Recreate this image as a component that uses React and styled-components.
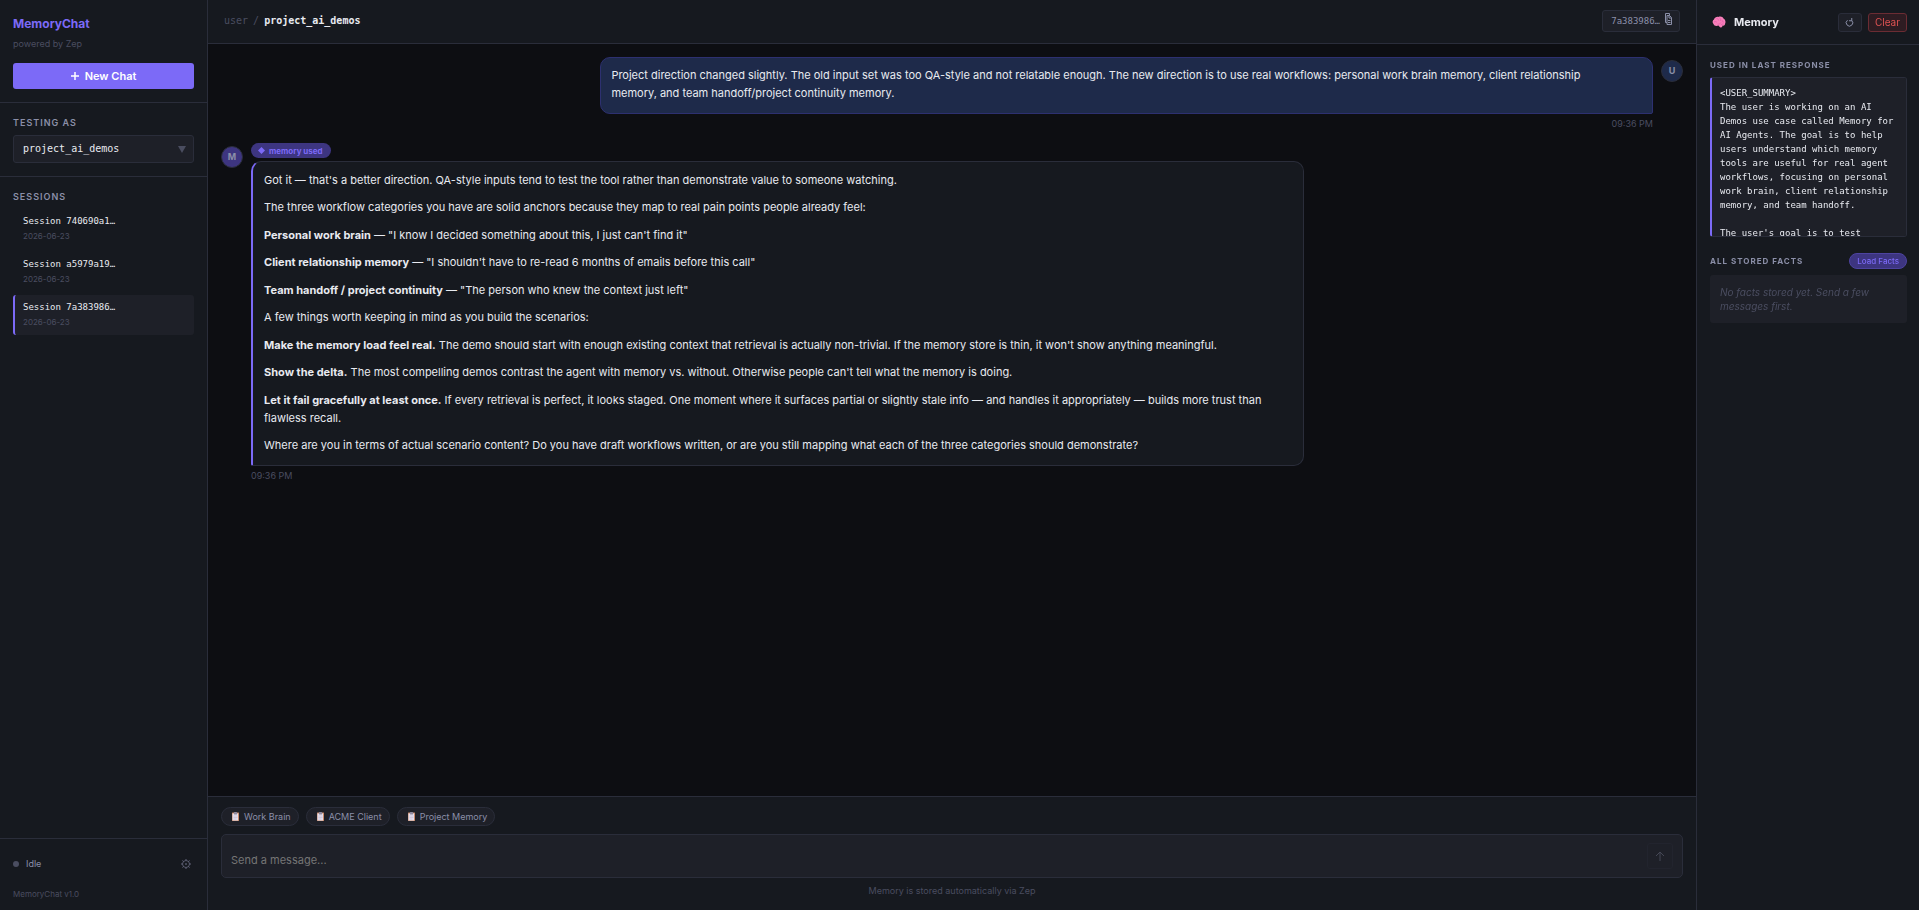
import React, { useState } from 'react';
import styled, { createGlobalStyle } from 'styled-components';

const sans = `Inter, 'Liberation Sans', sans-serif`;
const mono = `'DejaVu Sans Mono', 'Liberation Mono', monospace`;

const color = {
  bg: '#0d0e12',
  panel: '#16191f',
  raised: '#1e2028',
  line: '#2a2d3a',
  accent: '#7c6af7',
  accentDim: '#3d3580',
  text: '#e8eaf0',
  muted: '#8b8fa8',
  faint: '#4a4d60',
  user: '#1e2a4a',
  danger: '#e05252',
};

const GlobalStyle = createGlobalStyle`
  * {
    box-sizing: border-box;
    margin: 0;
    padding: 0;
  }

  body {
    background: ${color.bg};
    color: ${color.text};
    font-family: ${sans};
    font-size: 11px;
    line-height: 18px;
  }

  button,
  input,
  select {
    font-family: inherit;
    color: inherit;
  }

  button {
    cursor: pointer;
  }
`;

const Layout = styled.div`
  display: grid;
  grid-template-columns: 208px minmax(0, 1fr) 223px;
  height: 100vh;
`;

const Sidebar = styled.aside`
  display: flex;
  flex-direction: column;
  background: ${color.panel};
  border-right: 1px solid ${color.line};
`;

const Brand = styled.div`
  padding: 15px 13px 13px;
  border-bottom: 1px solid ${color.line};

  h1 {
    font-size: 12px;
    line-height: 18px;
    font-weight: 700;
    color: ${color.accent};
  }

  p {
    margin: 4px 0 12px;
    font-size: 9px;
    line-height: 14px;
    color: ${color.faint};
  }
`;

const NewChatButton = styled.button`
  display: flex;
  align-items: center;
  justify-content: center;
  gap: 6px;
  width: 100%;
  height: 26px;
  border: none;
  border-radius: 3px;
  background: ${color.accent};
  color: white;
  font-size: 11px;
  font-weight: 600;

  svg {
    stroke: currentColor;
    stroke-width: 1.5;
  }
`;

const Section = styled.section`
  padding: 13px;
  border-bottom: ${({ $last }) => ($last ? 'none' : `1px solid ${color.line}`)};
  flex: ${({ $last }) => ($last ? 1 : 'none')};
`;

const SectionLabel = styled.label`
  display: block;
  font-size: ${({ $small }) => ($small ? '8px' : '9px')};
  line-height: 14px;
  font-weight: ${({ $small }) => ($small ? 700 : 600)};
  letter-spacing: 1px;
  text-transform: uppercase;
  color: ${color.muted};
`;

const SelectBox = styled.div`
  display: grid;
  align-items: center;
  margin-top: 5px;

  select,
  svg {
    grid-area: 1 / 1;
  }

  select {
    appearance: none;
    width: 100%;
    height: 28px;
    padding: 0 24px 0 9px;
    border: 1px solid ${color.line};
    border-radius: 3px;
    background: ${color.raised};
    font-family: ${mono};
    font-size: 10px;
    line-height: 18px;
  }

  svg {
    justify-self: end;
    margin-right: 8px;
    pointer-events: none;
  }
`;

const SessionList = styled.ul`
  display: flex;
  flex-direction: column;
  gap: 3px;
  margin-top: 5px;
  list-style: none;
`;

const SessionItem = styled.button`
  display: flex;
  flex-direction: column;
  gap: 1px;
  width: 100%;
  padding: 6px 8px;
  border: none;
  border-left: 2px solid ${({ $active }) => ($active ? color.accent : 'transparent')};
  border-radius: 3px;
  background: ${({ $active }) => ($active ? color.raised : 'transparent')};
  text-align: left;
  font-size: 9px;
  line-height: 13px;

  .session-name {
    font-family: ${mono};
  }

  .session-date {
    font-size: 8px;
    line-height: 14px;
    color: ${color.faint};
  }
`;

const SidebarFooter = styled.footer`
  padding: 16px 13px 9px;
  border-top: 1px solid ${color.line};

  .version {
    margin-top: 14px;
    font-size: 8px;
    line-height: 14px;
    color: ${color.faint};
  }
`;

const StatusRow = styled.div`
  display: flex;
  align-items: center;
  gap: 7px;
  font-size: 9px;
  color: ${color.muted};

  .dot {
    width: 6px;
    height: 6px;
    border-radius: 50%;
    background: ${color.faint};
  }

  button {
    display: flex;
    margin-left: auto;
    margin-right: 3px;
    border: none;
    background: none;
    color: #6b6e84;
  }
`;

const Main = styled.main`
  display: flex;
  flex-direction: column;
  min-width: 0;
  min-height: 0;
`;

const TopBar = styled.header`
  display: flex;
  align-items: center;
  justify-content: space-between;
  padding: 10px 16px 11px;
  background: ${color.panel};
  border-bottom: 1px solid ${color.line};
`;

const Breadcrumb = styled.nav`
  display: flex;
  gap: 5px;
  font-family: ${mono};
  font-size: 10px;
  line-height: 14px;
  color: ${color.faint};

  strong {
    font-weight: 700;
    color: ${color.text};
  }
`;

const SessionPill = styled.button`
  display: flex;
  align-items: center;
  gap: 5px;
  height: 22px;
  padding: 0 7px 0 8px;
  border: 1px solid ${color.line};
  border-radius: 3px;
  background: ${color.raised};
  color: ${color.muted};
  font-family: ${mono};
  font-size: 9px;

  svg {
    margin-bottom: 4px;
  }
`;

const Messages = styled.div`
  flex: 1;
  display: flex;
  flex-direction: column;
  gap: 12px;
  min-height: 0;
  padding: 13px;
  overflow-y: auto;
`;

const MessageRow = styled.article`
  display: flex;
  flex-direction: ${({ $user }) => ($user ? 'row-reverse' : 'row')};
  align-items: flex-start;
  gap: 8px;
`;

const Avatar = styled.div`
  flex: none;
  display: flex;
  align-items: center;
  justify-content: center;
  width: 22px;
  height: 22px;
  margin-top: 3px;
  border: 1px solid ${color.line};
  border-radius: 50%;
  background: ${({ $user }) => ($user ? color.user : color.accentDim)};
  color: ${color.muted};
  font-size: 9px;
  font-weight: 700;
`;

const MessageBody = styled.div`
  display: flex;
  flex-direction: column;
  align-items: ${({ $user }) => ($user ? 'flex-end' : 'flex-start')};
  width: 72%;

  time {
    margin-top: 3px;
    font-size: 9px;
    line-height: 14px;
    color: ${color.faint};
  }
`;

const MemoryBadge = styled.span`
  display: flex;
  align-items: center;
  gap: 4px;
  height: 15px;
  margin-bottom: 3px;
  padding: 0 8px 0 7px;
  border-radius: 8px;
  background: ${color.accentDim};
  color: ${color.accent};
  font-size: 8px;
  font-weight: 700;
`;

const Bubble = styled.div`
  width: 100%;
  padding: ${({ $user }) => ($user ? '8px 32px 11px 10px' : '9px 11px 11px')};
  border: 1px solid ${({ $user }) => ($user ? '#2d3070' : color.line)};
  border-left: ${({ $user }) => ($user ? '1px solid #2d3070' : `2px solid ${color.accent}`)};
  border-radius: ${({ $user }) => ($user ? '10px 10px 2px 10px' : '10px 10px 10px 2px')};
  background: ${({ $user }) => ($user ? color.user : color.panel)};

  p + p {
    margin-top: 10px;
  }

  p:nth-child(odd) + p {
    margin-top: 9px;
  }

  strong {
    font-weight: 700;
  }
`;

const Composer = styled.form`
  padding: 10px 13px 12px;
  background: ${color.panel};
  border-top: 1px solid ${color.line};

  .hint {
    margin-top: 6px;
    text-align: center;
    font-size: 9px;
    line-height: 14px;
    color: ${color.faint};
  }
`;

const Chips = styled.div`
  display: flex;
  gap: 7px;
  margin-bottom: 8px;
`;

const Chip = styled.button`
  display: flex;
  align-items: center;
  gap: 5px;
  height: 19px;
  padding: 0 7px 0 10px;
  border: 1px solid ${color.line};
  border-radius: 10px;
  background: ${color.raised};
  color: ${color.muted};
  font-size: 9px;
`;

const InputBox = styled.div`
  display: flex;
  align-items: center;
  height: 44px;
  padding: 0 9px;
  border: 1px solid ${color.line};
  border-radius: 5px;
  background: ${color.raised};

  input {
    flex: 1;
    padding-top: 8px;
    border: none;
    outline: none;
    background: none;
    font-size: 11px;
  }

  input::placeholder {
    color: #757575;
  }

  button {
    display: flex;
    align-items: center;
    justify-content: center;
    width: 26px;
    height: 26px;
    border: 1px solid ${color.line};
    border-radius: 3px;
    background: none;
    color: ${color.muted};
    opacity: 0.35;
  }
`;

const MemoryPanel = styled.aside`
  min-width: 0;
  background: ${color.panel};
  border-left: 1px solid ${color.line};
`;

const PanelHeader = styled.header`
  display: flex;
  align-items: center;
  gap: 6px;
  height: 45px;
  padding: 0 12px 0 15px;
  border-bottom: 1px solid ${color.line};

  h2 {
    display: flex;
    align-items: center;
    gap: 8px;
    margin-right: auto;
    font-size: 11px;
    line-height: 18px;
    font-weight: 700;
  }
`;

const PanelButton = styled.button`
  display: flex;
  align-items: center;
  justify-content: center;
  min-width: 24px;
  height: 19px;
  padding: 0 6px;
  border: 1px solid ${({ $danger }) => ($danger ? '#6b2c33' : color.line)};
  border-radius: 3px;
  background: ${({ $danger }) => ($danger ? '#2e1c22' : color.raised)};
  color: ${({ $danger }) => ($danger ? color.danger : color.muted)};
  font-size: 10px;
`;

const PanelBody = styled.div`
  padding: 13px 12px 13px 13px;
`;

const Context = styled.pre`
  height: 160px;
  margin: 5px 0 16px;
  padding: 8px 4px 8px 8px;
  border: 1px solid ${color.line};
  border-left: 2px solid ${color.accent};
  border-radius: 3px;
  background: ${color.raised};
  font-family: ${mono};
  font-size: 9px;
  line-height: 14px;
  white-space: pre-wrap;
  overflow-y: scroll;

  &::-webkit-scrollbar {
    width: 4px;
  }

  &::-webkit-scrollbar-thumb {
    border-radius: 2px;
    background: ${color.line};
  }
`;

const FactsHead = styled.div`
  display: flex;
  align-items: center;
  justify-content: space-between;
  margin-bottom: 6px;
`;

const LoadButton = styled.button`
  height: 16px;
  padding: 0 7px;
  border: 1px solid #4d43a0;
  border-radius: 8px;
  background: ${color.accentDim};
  color: ${color.accent};
  font-size: 8px;
  font-weight: 500;
  line-height: 14px;
`;

const EmptyFacts = styled.p`
  padding: 10px;
  border-radius: 3px;
  background: ${color.raised};
  color: ${color.faint};
  font-size: 10px;
  line-height: 14px;
  font-style: italic;
`;

const ClipboardIcon = () => (
  <svg width="7" height="9" viewBox="0 0 14 18" aria-hidden="true">
    <rect x="0" y="1" width="14" height="17" rx="1" fill="#c98a6a" />
    <rect x="1" y="3" width="11" height="14" fill="#e6e0ee" />
    <rect x="4" y="0" width="6" height="5" rx="1" fill="#8d8aa0" />
    <path d="M3 8h8M3 11h8M3 14h6" stroke="#b9b3cc" />
  </svg>
);

const BrainIcon = () => (
  <svg width="14" height="12" viewBox="0 0 28 24" aria-hidden="true">
    <path
      d="M3 16C0 13 1 8 4 7c1-4 6-6 9-5 4-2 9 0 10 3 4 2 5 7 3 11 0 3-3 4-5 3 0 3-2 4-4 4-2-1-3-3-4-4-4 2-9 1-10-3z"
      fill="#f77fb9"
    />
    <path
      d="M4 12c3-2 5 0 6 1M9 5c3 0 4 2 4 4M15 4c3 1 3 4 1 6M21 8c-2 2 0 5 3 4M11 16c3 1 6-1 7-3M18 18c1-2 3-2 5-2"
      fill="none"
      stroke="#e05aa8"
      strokeWidth="1.5"
    />
  </svg>
);

const CopyIcon = () => (
  <svg width="7" height="12" viewBox="0 0 7 12" fill="none" stroke="currentColor" aria-hidden="true">
    <path d="M.5 9.500V.5h4v2M.5 9.500h1.500M2 11.500V2.500h2.500l2 2v7H2zM4 2.500v2.500h2.500M3 7.500h2.500M3 9.500h2.500" />
  </svg>
);

// clockwise open circle, arrow head at the top right
const RefreshIcon = () => (
  <svg width="9" height="9" viewBox="0 0 18 18" fill="none" stroke="currentColor" strokeWidth="2" aria-hidden="true">
    <path d="M13.500 5A6.500 6.500 0 1 1 5 4.500M13.500 0v5.500H8" />
  </svg>
);

const GearIcon = () => (
  <svg width="10" height="10" viewBox="0 0 20 20" fill="none" stroke="currentColor" aria-hidden="true">
    <circle cx="10" cy="10" r="7" strokeWidth="1.500" />
    <circle cx="10" cy="10" r="1.200" fill="currentColor" />
    <path
      d="M10 0v3M10 17v3M0 10h3M17 10h3M3 3l2 2M15 15l2 2M3 17l2-2M15 5l2-2"
      strokeWidth="1.800"
    />
  </svg>
);

const sessions = [
  { id: '740690a1', date: '2026-06-23' },
  { id: 'a5979a19', date: '2026-06-23' },
  { id: '7a383986', date: '2026-06-23' },
];

const prompts = ['Work Brain', 'ACME Client', 'Project Memory'];

const reply = [
  { text: "Got it — that's a better direction. QA-style inputs tend to test the tool rather than demonstrate value to someone watching." },
  { text: 'The three workflow categories you have are solid anchors because they map to real pain points people already feel:' },
  { lead: 'Personal work brain', text: ' — "I know I decided something about this, I just can\'t find it"' },
  { lead: 'Client relationship memory', text: ' — "I shouldn\'t have to re-read 6 months of emails before this call"' },
  { lead: 'Team handoff / project continuity', text: ' — "The person who knew the context just left"' },
  { text: 'A few things worth keeping in mind as you build the scenarios:' },
  {
    lead: 'Make the memory load feel real.',
    text: " The demo should start with enough existing context that retrieval is actually non-trivial. If the memory store is thin, it won't show anything meaningful.",
  },
  {
    lead: 'Show the delta.',
    text: " The most compelling demos contrast the agent with memory vs. without. Otherwise people can't tell what the memory is doing.",
  },
  {
    lead: 'Let it fail gracefully at least once.',
    text: ' If every retrieval is perfect, it looks staged. One moment where it surfaces partial or slightly stale info — and handles it appropriately — builds more trust than flawless recall.',
  },
  {
    text: 'Where are you in terms of actual scenario content? Do you have draft workflows written, or are you still mapping what each of the three categories should demonstrate?',
  },
];

const summary = `<USER_SUMMARY>
The user is working on an AI Demos use case called Memory for AI Agents. The goal is to help users understand which memory tools are useful for real agent workflows, focusing on personal work brain, client relationship memory, and team handoff.

The user's goal is to test`;

const App = () => {
  const [active, setActive] = useState('7a383986');
  const [draft, setDraft] = useState('');

  return (
    <>
      <GlobalStyle />
      <Layout>
        <Sidebar>
          <Brand>
            <h1>MemoryChat</h1>
            <p>powered by Zep</p>
            <NewChatButton type="button">
              <svg width="8" height="8" viewBox="0 0 8 8" aria-hidden="true">
                <path d="M4 0v8M0 4h8" />
              </svg>
              <span>New Chat</span>
            </NewChatButton>
          </Brand>
          <Section>
            <SectionLabel htmlFor="user">Testing as</SectionLabel>
            <SelectBox>
              <select id="user" defaultValue="project_ai_demos">
                <option>project_ai_demos</option>
              </select>
              <svg width="8" height="7" viewBox="0 0 8 7" aria-hidden="true">
                <path d="M0 0h8L4 7z" fill={color.faint} />
              </svg>
            </SelectBox>
          </Section>
          <Section $last>
            <SectionLabel as="h2">Sessions</SectionLabel>
            <SessionList>
              {sessions.map((s) => (
                <li key={s.id}>
                  <SessionItem type="button" $active={s.id === active} onClick={() => setActive(s.id)}>
                    <span className="session-name">Session {s.id}…</span>
                    <span className="session-date">{s.date}</span>
                  </SessionItem>
                </li>
              ))}
            </SessionList>
          </Section>
          <SidebarFooter>
            <StatusRow>
              <span className="dot" />
              <span>Idle</span>
              <button type="button" aria-label="Settings">
                <GearIcon />
              </button>
            </StatusRow>
            <p className="version">MemoryChat v1.0</p>
          </SidebarFooter>
        </Sidebar>

        <Main>
          <TopBar>
            <Breadcrumb>
              <span>user</span>
              <span>/</span>
              <strong>project_ai_demos</strong>
            </Breadcrumb>
            <SessionPill type="button">
              <span>7a383986…</span>
              <CopyIcon />
            </SessionPill>
          </TopBar>
          <Messages>
            <MessageRow $user>
              <Avatar $user>U</Avatar>
              <MessageBody $user>
                <Bubble $user>
                  <p>
                    Project direction changed slightly. The old input set was too QA-style and not relatable enough. The
                    new direction is to use real workflows: personal work brain memory, client relationship memory, and
                    team handoff/project continuity memory.
                  </p>
                </Bubble>
                <time>09:36 PM</time>
              </MessageBody>
            </MessageRow>
            <MessageRow>
              <Avatar>M</Avatar>
              <MessageBody>
                <MemoryBadge>
                  <svg width="7" height="7" viewBox="0 0 8 8" aria-hidden="true">
                    <path d="M4 0l4 4-4 4-4-4z" fill="currentColor" />
                  </svg>
                  <span>memory used</span>
                </MemoryBadge>
                <Bubble>
                  {reply.map((p) => (
                    <p key={p.text}>
                      {p.lead && <strong>{p.lead}</strong>}
                      {p.text}
                    </p>
                  ))}
                </Bubble>
                <time>09:36 PM</time>
              </MessageBody>
            </MessageRow>
          </Messages>
          <Composer onSubmit={(e) => e.preventDefault()}>
            <Chips>
              {prompts.map((name) => (
                <Chip key={name} type="button">
                  <ClipboardIcon />
                  <span>{name}</span>
                </Chip>
              ))}
            </Chips>
            <InputBox>
              <input
                aria-label="Message"
                placeholder="Send a message..."
                value={draft}
                onChange={(e) => setDraft(e.target.value)}
              />
              <button type="submit" aria-label="Send">
                <svg width="10" height="10" viewBox="0 0 10 10" fill="none" stroke="currentColor" aria-hidden="true">
                  <path d="M5 10V1M1 5l4-4 4 4" />
                </svg>
              </button>
            </InputBox>
            <p className="hint">Memory is stored automatically via Zep</p>
          </Composer>
        </Main>

        <MemoryPanel>
          <PanelHeader>
            <h2>
              <BrainIcon />
              <span>Memory</span>
            </h2>
            <PanelButton type="button" aria-label="Refresh">
              <RefreshIcon />
            </PanelButton>
            <PanelButton type="button" $danger>
              Clear
            </PanelButton>
          </PanelHeader>
          <PanelBody>
            <SectionLabel as="h3" $small>
              Used in last response
            </SectionLabel>
            <Context>{summary}</Context>
            <FactsHead>
              <SectionLabel as="h3" $small>
                All stored facts
              </SectionLabel>
              <LoadButton type="button">Load Facts</LoadButton>
            </FactsHead>
            <EmptyFacts>No facts stored yet. Send a few messages first.</EmptyFacts>
          </PanelBody>
        </MemoryPanel>
      </Layout>
    </>
  );
};

export default App;
